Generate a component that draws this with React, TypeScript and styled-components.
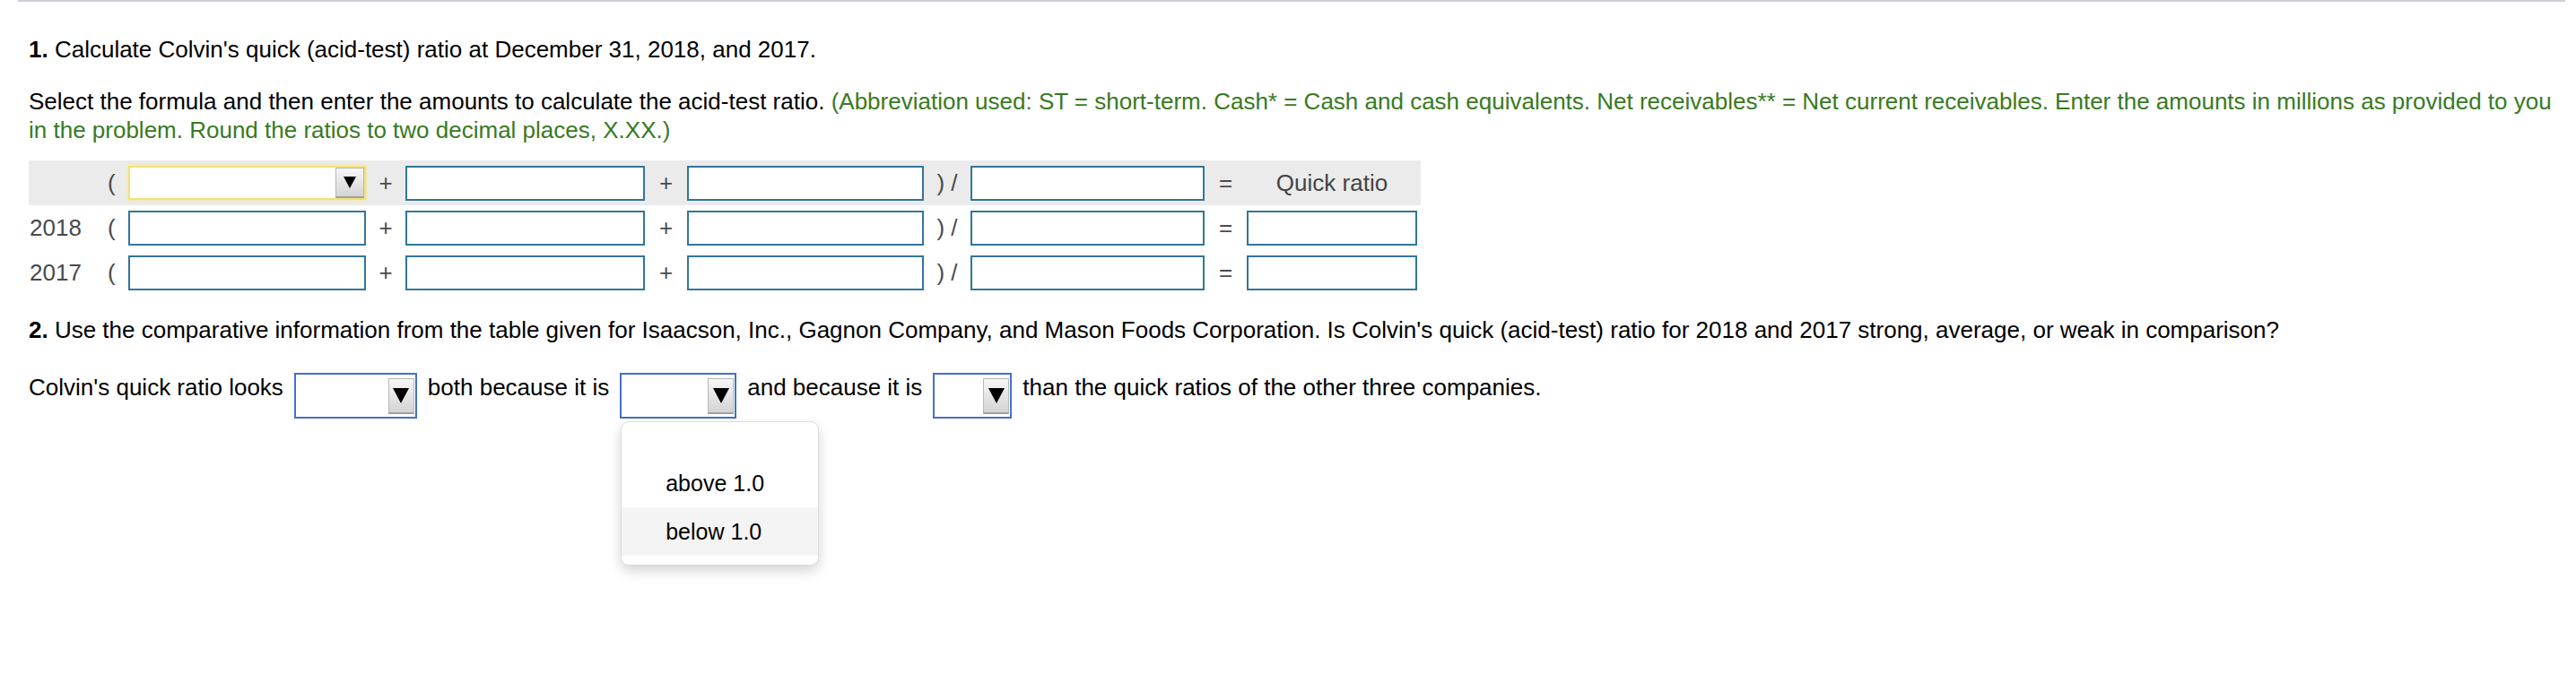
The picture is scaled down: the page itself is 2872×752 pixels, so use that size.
import React from 'react';
import styled, { createGlobalStyle, css } from 'styled-components';

const GlobalStyle = createGlobalStyle`
  html, body {
    margin: 0;
    padding: 0;
    background: #ffffff;
  }
  body {
    font-family: "Liberation Sans", Arial, Helvetica, sans-serif;
    color: #000;
  }
`;

const Page = styled.div`
  min-height: 752px;
  padding: 0 12px 0 20px;
`;

const Sheet = styled.div`
  border-top: 2px solid #cdd0dc;
  padding: 37px 4px 0 12px;
  font-size: 26px;
  line-height: 32px;
`;

const Question = styled.p`
  margin: 0;
  & b {
    font-weight: bold;
  }
`;

const Instructions = styled.p`
  margin: 26px 0 18px;
`;

const Hint = styled.span`
  color: #387a22;
`;

const FormulaRow = styled.div<{ $header?: boolean }>`
  display: grid;
  grid-template-columns: 84px 27px 265px 44px 267px 47px 264px 52px 261px 47px 190px;
  align-items: center;
  width: fit-content;
  height: 50px;
  padding-right: 4px;
  color: #4a4a4a;
  background: ${(p) => (p.$header ? '#ebebeb' : 'transparent')};
`;

const YearLabel = styled.span`
  padding-left: 1px;
`;

const Paren = styled.span`
  padding-left: 4px;
`;

const Op = styled.span`
  text-align: center;
`;

const NumInput = styled.input`
  box-sizing: border-box;
  width: 100%;
  height: 39px;
  border: 2px solid #31769a;
  border-radius: 0;
  background: #fff;
  padding: 0 6px;
  font: inherit;
  outline: none;
`;

const ColumnTitle = styled.span`
  text-align: center;
  color: #444;
`;

const Arrow = styled.span<{ $big?: boolean }>`
  width: 0;
  height: 0;
  border-left: ${(p) => (p.$big ? '9px' : '7px')} solid transparent;
  border-right: ${(p) => (p.$big ? '9px' : '7px')} solid transparent;
  border-top: ${(p) => (p.$big ? '17px' : '13px')} solid #000;
`;

const ArrowButton = styled.span<{ $inset?: boolean }>`
  box-sizing: border-box;
  display: flex;
  align-items: center;
  justify-content: center;
  width: ${(p) => (p.$inset ? '29px' : '32px')};
  height: ${(p) => (p.$inset ? '40px' : '100%')};
  margin-right: ${(p) => (p.$inset ? '1px' : '0')};
  background: linear-gradient(#f7f7f7, #d4d4d4);
  border: 1px solid #b8b8b8;
  border-bottom: 2px solid #a0a0a0;
`;

const SelectBox = styled.div<{ $focus?: boolean; $width: number; $height: number }>`
  box-sizing: border-box;
  position: relative;
  display: flex;
  align-items: center;
  justify-content: flex-end;
  flex: none;
  width: ${(p) => p.$width}px;
  height: ${(p) => p.$height}px;
  background: #fff;
  ${(p) =>
    p.$focus
      ? css`
          border: 2px solid #f5df78;
          box-shadow: 0 0 3px 1px #f8ea9e;
        `
      : css`
          border: 2px solid #4470c8;
        `}
`;

const Section2 = styled.p`
  margin: 23px 0 32px;
`;

const AnswerLine = styled.div`
  display: flex;
  align-items: flex-start;
  gap: 12px;
`;

const Words = styled.span`
  white-space: nowrap;
`;

const Menu = styled.ul`
  position: absolute;
  top: calc(100% + 5px);
  left: -1px;
  z-index: 5;
  box-sizing: border-box;
  width: 221px;
  margin: 0;
  padding: 10px 0;
  list-style: none;
  background: #fff;
  border: 1px solid #dcdcdc;
  border-radius: 9px;
  box-shadow: 0 6px 14px rgba(0, 0, 0, 0.17);
  overflow: hidden;
`;

const MenuItem = styled.li<{ $hover?: boolean; $blank?: boolean }>`
  height: ${(p) => (p.$blank ? '31px' : '54px')};
  display: flex;
  align-items: center;
  padding-left: 49px;
  font-size: 25px;
  color: #000;
  background: ${(p) => (p.$hover ? '#f4f4f4' : '#fff')};
`;

type Row = { label?: string; header?: boolean };

const rows: Row[] = [{ header: true }, { label: '2018' }, { label: '2017' }];

function Formula() {
  return (
    <div>
      {rows.map((r, i) => (
        <FormulaRow key={i} $header={r.header}>
          <YearLabel>{r.label ?? ''}</YearLabel>
          <Paren>(</Paren>
          {r.header ? (
            <SelectBox $focus $width={265} $height={38}>
              <ArrowButton>
                <Arrow />
              </ArrowButton>
            </SelectBox>
          ) : (
            <NumInput />
          )}
          <Op>+</Op>
          <NumInput />
          <Op>+</Op>
          <NumInput />
          <Op>) /</Op>
          <NumInput />
          <Op>=</Op>
          {r.header ? <ColumnTitle>Quick ratio</ColumnTitle> : <NumInput />}
        </FormulaRow>
      ))}
    </div>
  );
}

function Dropdown({ width, children }: { width: number; children?: React.ReactNode }) {
  return (
    <SelectBox $width={width} $height={51}>
      <ArrowButton $inset>
        <Arrow $big />
      </ArrowButton>
      {children}
    </SelectBox>
  );
}

export default function App() {
  return (
    <>
      <GlobalStyle />
      <Page>
        <Sheet>
          <Question>
            <b>1.</b> Calculate Colvin's quick (acid-test) ratio at December 31, 2018, and 2017.
          </Question>
          <Instructions>
            Select the formula and then enter the amounts to calculate the acid-test ratio.{' '}
            <Hint>
              (Abbreviation used: ST = short-term. Cash* = Cash and cash equivalents. Net receivables** = Net
              current receivables. Enter the amounts in millions as provided to you in the problem. Round the
              ratios to two decimal places, X.XX.)
            </Hint>
          </Instructions>
          <Formula />
          <Section2>
            <b>2.</b> Use the comparative information from the table given for Isaacson, Inc., Gagnon Company, and
            Mason Foods Corporation. Is Colvin's quick (acid-test) ratio for 2018 and 2017 strong, average, or weak
            in comparison?
          </Section2>
          <AnswerLine>
            <Words>Colvin's quick ratio looks</Words>
            <Dropdown width={137} />
            <Words>both because it is</Words>
            <Dropdown width={130}>
              <Menu>
                <MenuItem $blank />
                <MenuItem>above 1.0</MenuItem>
                <MenuItem $hover>below 1.0</MenuItem>
              </Menu>
            </Dropdown>
            <Words>and because it is</Words>
            <Dropdown width={88} />
            <Words>than the quick ratios of the other three companies.</Words>
          </AnswerLine>
        </Sheet>
      </Page>
    </>
  );
}
